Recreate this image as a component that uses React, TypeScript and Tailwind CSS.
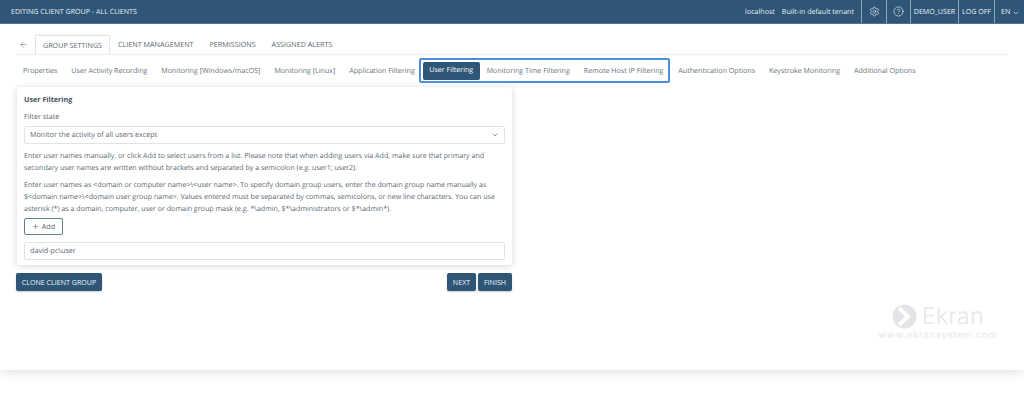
import { Settings, CircleHelp, ChevronDown, Plus, ArrowLeft } from "lucide-react";

const subTabsA = ["Properties", "User Activity Recording", "Monitoring [Windows/macOS]", "Monitoring [Linux]", "Application Filtering"];
const subTabsB = ["Authentication Options", "Keystroke Monitoring", "Additional Options"];

function Sub({ label }: { label: string }) {
  return <span className="block px-[7px] whitespace-nowrap text-[7.1px] leading-[12px] text-[#66727c]">{label}</span>;
}

export default function App() {
  return (
    <div className="relative w-[1024px] h-[400px] overflow-hidden bg-white font-['Open_Sans',sans-serif] text-[#5c6871] [text-rendering:geometricPrecision]">
      <div className="h-[370px] shadow-[0_2px_10px_rgba(0,0,0,0.13)]">
        <header className="flex h-[24px] items-center justify-between border-b border-[#4d7590] bg-[#2f5677] pl-[11px] text-[7.1px] text-[#e8eef2]">
          <span className="pt-[2px]">EDITING CLIENT GROUP - ALL CLIENTS</span>
          <div className="flex h-full items-center">
            <span className="mr-[7px] pt-[2px]">localhost</span>
            <span className="mr-[7px] pt-[2px]">Built-in default tenant</span>
            <span className="flex h-full w-[25px] items-center justify-center border-l border-[#8fa9bc]"><Settings size={11} strokeWidth={1.4} /></span>
            <span className="flex h-full w-[24px] items-center justify-center border-l border-[#8fa9bc]"><CircleHelp size={11} strokeWidth={1.4} /></span>
            <span className="flex h-full w-[48px] items-center justify-center border-l border-[#8fa9bc] pt-[2px]">DEMO_USER</span>
            <span className="flex h-full w-[36px] items-center justify-center border-l border-[#8fa9bc] pt-[2px]">LOG OFF</span>
            <span className="flex h-full w-[30px] items-center gap-[2px] border-l border-[#8fa9bc] pl-[6px] pt-[2px]">EN<ChevronDown size={8} /></span>
          </div>
        </header>

        <div className="mx-[16px] mt-[12px] flex h-[19px] w-[992px] items-end border-b border-[#eeeeee]">
          <ArrowLeft size={9} strokeWidth={1.4} className="mb-[5px] ml-[3px] mr-[7px] text-[#5f7282]" />
          <span className="flex h-[19px] w-[75px] items-center justify-center rounded-t-[2px] border border-b-0 border-[#e4e4e4] pt-[2px] text-[7.2px] font-medium text-[#5c6871] shadow-[0_-1px_2px_rgba(0,0,0,0.05)]">GROUP SETTINGS</span>
          <div className="flex h-[19px] items-center gap-[16px] pl-[8px] pt-[2px] text-[7.2px] font-medium text-[#5c6871]">
            <span>CLIENT MANAGEMENT</span>
            <span>PERMISSIONS</span>
            <span>ASSIGNED ALERTS</span>
          </div>
        </div>

        <nav className="ml-[16px] mt-[3px] flex h-[25px] items-center">
          {subTabsA.map((t) => <Sub key={t} label={t} />)}
          <div className="ml-[-3px] mr-[1px] flex h-[25px] items-center rounded-[2px] border-2 border-[#4a90dc] pl-[2px] pr-[2px]">
            <span className="flex h-[18px] items-center rounded-[2px] bg-[#2f5677] px-[6.5px] text-[7.1px] text-white">User Filtering</span>
            <Sub label="Monitoring Time Filtering" />
            <div className="mr-[-4px]"><Sub label="Remote Host IP Filtering" /></div>
          </div>
          {subTabsB.map((t) => <Sub key={t} label={t} />)}
        </nav>

        <section className="ml-[17px] mt-[4px] h-[178px] w-[495px] rounded-[2px] bg-white px-[7px] pt-[7px] shadow-[0_1px_7px_rgba(0,0,0,0.17)]">
          <h2 className="text-[7.2px] font-bold leading-[12px] text-[#45525c]">User Filtering</h2>
          <p className="mt-[6px] text-[7.2px] leading-[11px]">Filter state</p>
          <div className="mt-[3px] flex h-[18px] items-center justify-between rounded-[2px] border border-[#e2e2e2] px-[5px] text-[7.2px]">
            <span>Monitor the activity of all users except</span>
            <ChevronDown size={8} />
          </div>
          <p className="mt-[6px] text-[7.1px] leading-[12px] whitespace-nowrap">
            Enter user names manually, or click Add to select users from a list. Please note that when adding users via Add, make sure that primary and<br />
            secondary user names are written without brackets and separated by a semicolon (e.g. user1; user2).
          </p>
          <p className="mt-[5px] text-[7.1px] leading-[12px] whitespace-nowrap">
            {"Enter user names as <domain or computer name>\\<user name>. To specify domain group users, enter the domain group name manually as"}<br />
            {"$<domain name>\\<domain user group name>. Values entered must be separated by commas, semicolons, or new line characters. You can use"}<br />
            {"asterisk (*) as a domain, computer, user or domain group mask (e.g. *\\admin, $*\\administrators or $*\\admin*)."}
          </p>
          <button className="mt-[3px] flex h-[17px] w-[39px] items-center justify-center gap-[3px] rounded-[2px] border border-[#5f8099] text-[7.2px]">
            <Plus size={7} />Add
          </button>
          <div className="mt-[7px] flex h-[18px] items-center rounded-[2px] border border-[#e2e2e2] px-[5px] text-[7.2px]">david-pc\user</div>
        </section>

        <div className="ml-[16px] mt-[8px] flex w-[496px] justify-between">
          <button className="h-[18px] w-[86px] rounded-[2px] bg-[#2f5677] text-[7.1px] text-[#f0f4f7] shadow-[0_1px_2px_rgba(0,0,0,0.2)]">CLONE CLIENT GROUP</button>
          <div className="flex gap-[2px]">
            <button className="h-[18px] w-[29px] rounded-[2px] bg-[#2f5677] text-[7.1px] text-[#f0f4f7] shadow-[0_1px_2px_rgba(0,0,0,0.2)]">NEXT</button>
            <button className="h-[18px] w-[34px] rounded-[2px] bg-[#2f5677] text-[7.1px] text-[#f0f4f7] shadow-[0_1px_2px_rgba(0,0,0,0.2)]">FINISH</button>
          </div>
        </div>
      </div>

      <div className="absolute left-[877px] top-[304px] flex w-[122px] flex-col items-center text-[#e6e8ea]">
        <div className="flex items-center gap-[5px]">
          <svg width="25" height="25" viewBox="0 0 25 25">
            <circle cx="12.5" cy="12.5" r="12" fill="#e2e4e7" />
            <path d="M7 4 L16 12.5 L7 21" fill="none" stroke="#fff" strokeWidth="4" />
          </svg>
          <span className="font-['Inter',sans-serif] text-[23px] font-light leading-[25px] tracking-[0.3px]">Ekran</span>
        </div>
        <span className="mt-[1px] whitespace-nowrap font-['Inter',sans-serif] text-[9.5px] font-semibold leading-[12px] tracking-[0.55px] text-[#ebedef]">www.ekransystem.com</span>
      </div>
    </div>
  );
}
